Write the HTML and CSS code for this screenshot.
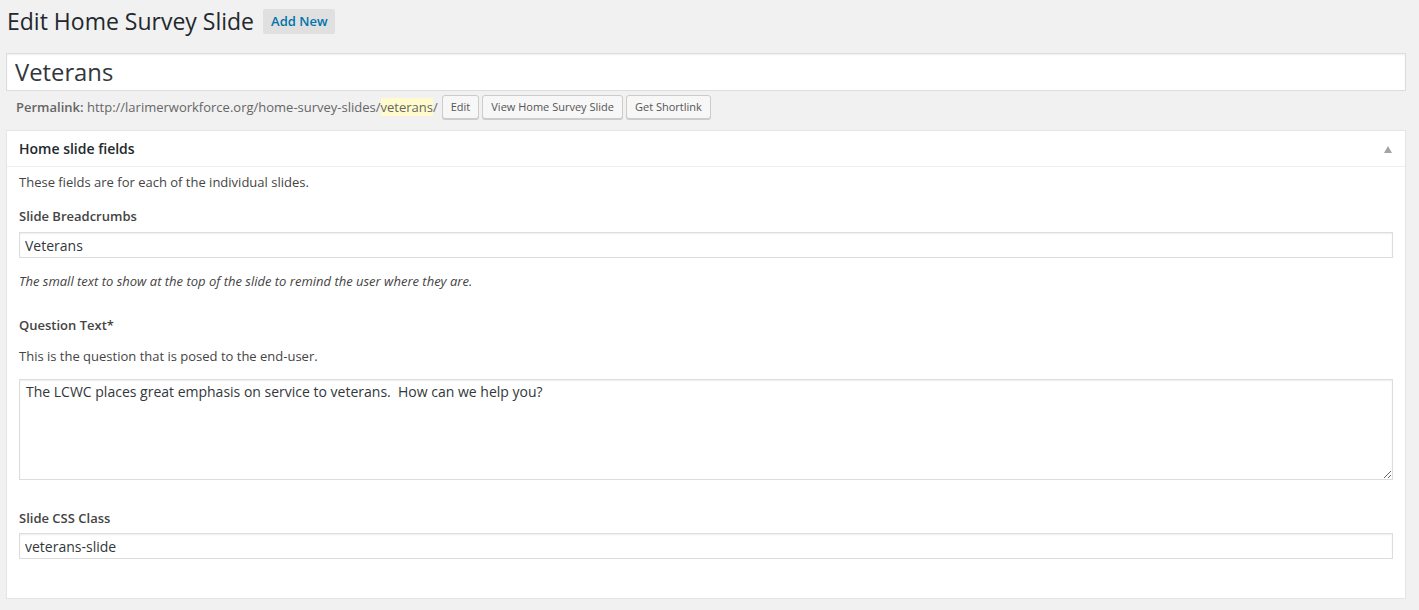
FILE: index.html
```html
<!DOCTYPE html>
<html>
<head>
<meta charset="utf-8">
<link rel="stylesheet" href="styles.css">
</head>
<body>
<div class="wrap">
  <div class="title-row">
    <h1 class="page-title">Edit Home Survey Slide</h1>
    <a class="add-new">Add New</a>
  </div>
  <input class="title-input" type="text" value="Veterans">
  <div class="permalink-row">
    <span class="perma-text"><strong>Permalink:</strong> http://larimerworkforce.org/home-survey-slides/<span class="slug">veterans</span>/</span>
    <button class="btn-small">Edit</button>
    <button class="btn-small">View Home Survey Slide</button>
    <button class="btn-small">Get Shortlink</button>
  </div>
  <div class="postbox">
    <div class="postbox-header">
      <h3 class="postbox-title">Home slide fields</h3>
      <span class="toggle-arrow"></span>
    </div>
    <div class="inside">
      <p class="intro">These fields are for each of the individual slides.</p>
      <div class="field field-breadcrumbs">
        <label class="field-label">Slide Breadcrumbs</label>
        <input class="text-input" type="text" value="Veterans">
        <p class="field-desc italic">The small text to show at the top of the slide to remind the user where they are.</p>
      </div>
      <div class="field field-question">
        <label class="field-label">Question Text*</label>
        <p class="field-desc pre">This is the question that is posed to the end-user.</p>
        <textarea class="textarea">The LCWC places great emphasis on service to veterans.  How can we help you?</textarea>
      </div>
      <div class="field field-css">
        <label class="field-label">Slide CSS Class</label>
        <input class="text-input" type="text" value="veterans-slide">
      </div>
    </div>
  </div>
</div>
</body>
</html>
```

FILE: styles.css
```css
* { box-sizing: border-box; }
html, body { margin: 0; padding: 0; background: #f1f1f1; }
body {
  font-family: "Open Sans", "Noto Sans", "Liberation Sans", sans-serif;
  font-size: 13px;
  color: #444;
}
.wrap {
  margin: 0 13px 0 6px;
}
.title-row {
  display: flex;
  align-items: center;
  height: 42px;
  margin-bottom: 11px;
}
.page-title {
  margin: 0 0 0 1px;
  font-size: 23px;
  font-weight: 400;
  color: #23282d;
  line-height: 42px;
  height: 42px;
}
.add-new {
  margin-left: 9px;
  display: inline-block;
  height: 25px;
  line-height: 25px;
  padding: 0 8px;
  background: #e0e0e0;
  color: #0073aa;
  font-size: 13px;
  font-weight: 600;
  border-radius: 2px;
}
.title-input {
  display: block;
  width: 100%;
  height: 38px;
  margin: 0;
  padding: 2px 8px 3px;
  border: 1px solid #ddd;
  box-shadow: inset 0 1px 2px rgba(0,0,0,.07);
  background: #fff;
  font-family: "Open Sans", "Noto Sans", sans-serif;
  font-size: 23.8px;
  color: #32373c;
  outline: none;
}
.permalink-row {
  display: flex;
  align-items: center;
  height: 24px;
  margin-top: 4px;
  padding-left: 10px;
}
.perma-text {
  color: #666;
  font-size: 13px;
  margin-right: 4px;
}
.perma-text strong { font-weight: 600; }
.slug { background: #fffbcc; }
.btn-small {
  height: 24px;
  padding: 0 8px;
  margin-right: 3px;
  font-family: "Open Sans", "Noto Sans", sans-serif;
  font-size: 11px;
  color: #555;
  background: #f7f7f7;
  border: 1px solid #ccc;
  border-radius: 3px;
  box-shadow: 0 1px 0 #ccc;
  line-height: 22px;
}
.postbox {
  margin-top: 11px;
  background: #fff;
  border: 1px solid #e5e5e5;
  box-shadow: 0 1px 1px rgba(0,0,0,.04);
  padding-bottom: 39px;
}
.postbox-header {
  display: flex;
  align-items: center;
  justify-content: space-between;
  height: 36px;
  border-bottom: 1px solid #eee;
  padding: 0 12px;
}
.postbox-title {
  margin: 0;
  font-size: 14px;
  font-weight: 600;
  color: #23282d;
}
.toggle-arrow {
  width: 0;
  height: 0;
  border-left: 4.5px solid transparent;
  border-right: 4.5px solid transparent;
  border-bottom: 7px solid #a0a5aa;
  margin-right: 1px;
  margin-top: 1px;
}
.inside {
  padding: 0 12px;
}
.intro {
  margin: 5px 0 0;
  line-height: 20px;
}
.field-label {
  display: block;
  font-weight: 600;
  line-height: 20px;
  color: #444;
}
.field-breadcrumbs { margin-top: 14px; }
.field-breadcrumbs .text-input { margin-top: 6px; }
.text-input {
  display: block;
  width: 100%;
  height: 26px;
  margin: 0;
  padding: 0 5px;
  border: 1px solid #ddd;
  box-shadow: inset 0 1px 2px rgba(0,0,0,.07);
  background: #fff;
  font-family: "Open Sans", "Noto Sans", sans-serif;
  font-size: 14px;
  color: #32373c;
  outline: none;
}
.field-desc {
  margin: 0;
  line-height: 20px;
}
.italic {
  font-style: italic;
  margin-top: 13px;
}
.field-question { margin-top: 24px; }
.field-question .pre { margin-top: 11px; }
.textarea {
  display: block;
  width: 100%;
  height: 101px;
  margin-top: 13px;
  padding: 2px 6px;
  border: 1px solid #ddd;
  box-shadow: inset 0 1px 2px rgba(0,0,0,.07);
  background: #fff;
  font-family: "Open Sans", "Noto Sans", sans-serif;
  font-size: 14px;
  line-height: 20px;
  color: #32373c;
  outline: none;
  resize: vertical;
}
.field-css { margin-top: 28px; }
.field-css .text-input { margin-top: 5px; }
```
